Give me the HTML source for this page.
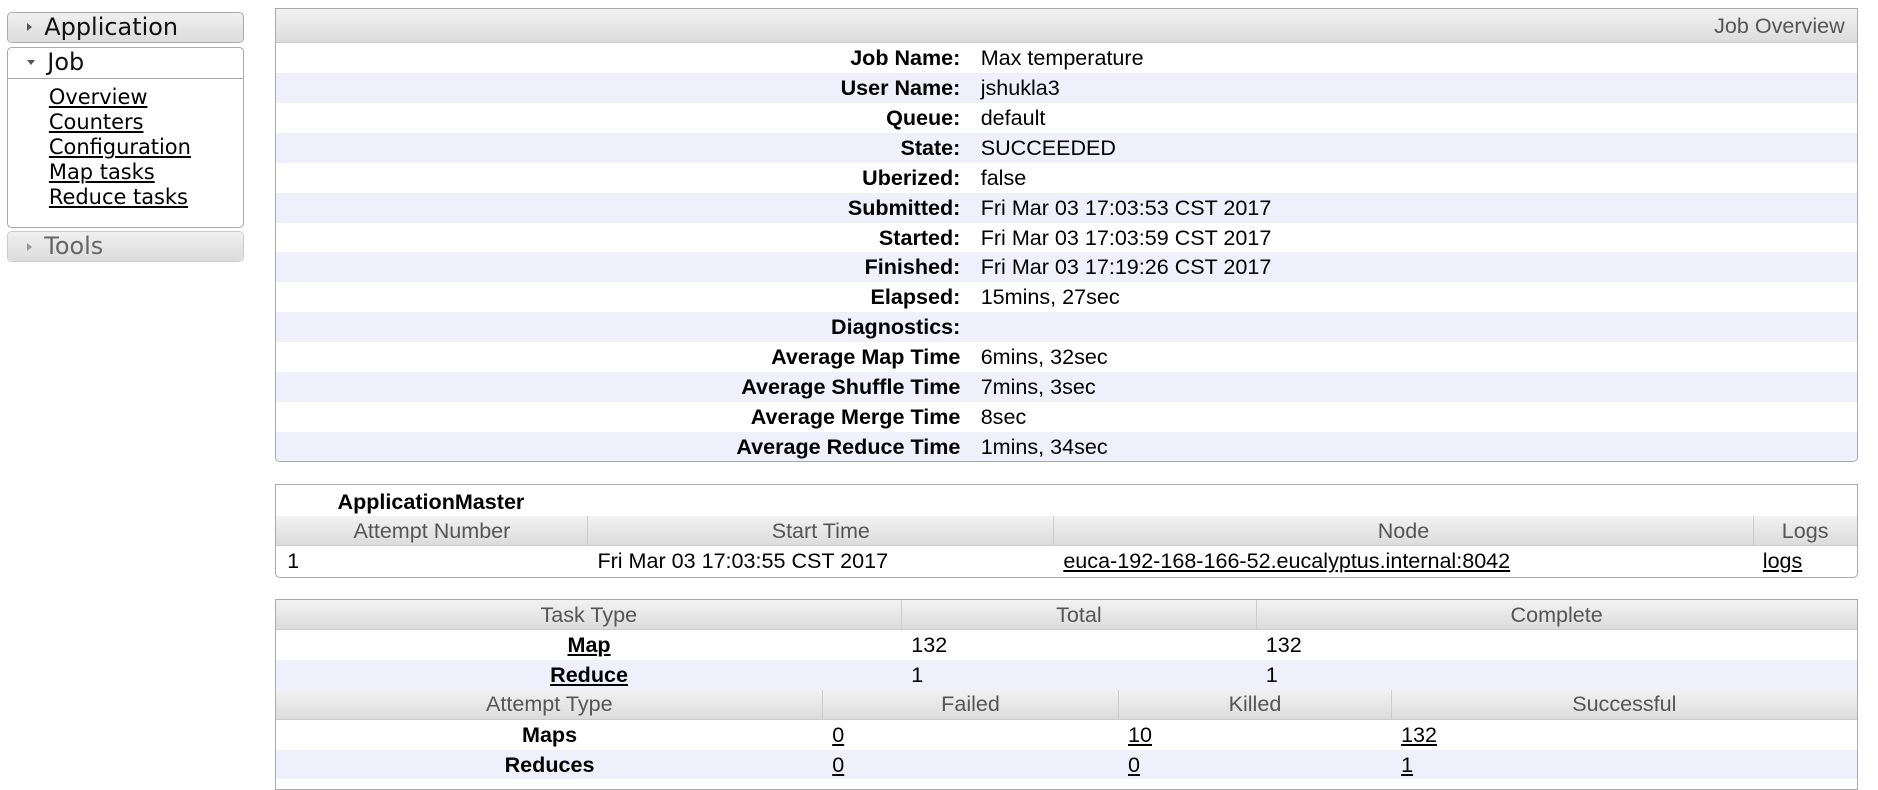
<!DOCTYPE html>
<html><head><meta charset="utf-8"><style>
*{box-sizing:border-box}
html,body{margin:0;padding:0;background:#fff}
body{width:1878px;height:776px;overflow:hidden}
#w{zoom:1.19770;width:1568px;height:648px;position:relative;font-family:"Liberation Sans",Arial,sans-serif;color:#000}
.sb{position:absolute;left:6px;width:198px;font-family:"DejaVu Sans",Verdana,sans-serif;border:1px solid #aaa;border-radius:4px}
.sbh{background:linear-gradient(#f0f0f0,#dcdcdc);height:100%;border-radius:4px;font-size:20px;padding-left:16px;line-height:24px;color:#111}
.tri{display:inline-block;width:0;height:0;border-top:4px solid transparent;border-bottom:4px solid transparent;border-left:5px solid #555;margin-right:10px;vertical-align:3px}
.trid{display:inline-block;width:0;height:0;border-left:4px solid transparent;border-right:4px solid transparent;border-top:5px solid #555;margin-right:10px;vertical-align:4px}
.links a{display:block;color:#000;font-size:17.5px;line-height:21px;margin-left:34px}
.box{position:absolute;left:230px;width:1321px;border:1px solid #aaa;border-radius:0 0 4px 4px;overflow:hidden}
.hd{background:linear-gradient(#f2f2f2,#dcdcdc);color:#555;font-size:18px}
table{border-collapse:collapse;width:100%;font-size:18px;table-layout:fixed}
td,th{padding:0;height:25px;white-space:nowrap}
th{font-weight:normal;color:#555;background:linear-gradient(#f2f2f2,#dcdcdc);border-left:1px solid #ccc;border-bottom:1px solid #ccc}
th:first-child{border-left:none}
tr.o td{background:#f0f0fc}
td.l{text-align:right;font-weight:bold;padding-right:17px;width:588px}
a{color:#000;text-decoration:underline}
</style></head><body><div id="w">
<div class="sb" style="top:10px;height:26px"><div class="sbh"><span class="tri"></span>Application</div></div>
<div class="sb" style="top:39px;height:151px">
<div style="height:26px;border-bottom:1px solid #aaa;font-size:20px;padding-left:16px;line-height:24px;color:#111"><span class="trid"></span>Job</div>
<div class="links" style="padding-top:5px"><a>Overview</a><a>Counters</a><a>Configuration</a><a>Map tasks</a><a>Reduce tasks</a></div>
</div>
<div class="sb" style="top:193px;height:26px;border-color:#ccc"><div class="sbh" style="color:#666"><span class="tri" style="border-left-color:#999"></span>Tools</div></div>

<div class="box" style="top:7px;height:379px">
<div class="hd" style="height:28px;line-height:28px;text-align:right;padding-right:10px;border-bottom:1px solid #ccc">Job Overview</div>
<table>
<tr><td class="l">Job Name:</td><td>Max temperature</td></tr>
<tr class="o"><td class="l">User Name:</td><td>jshukla3</td></tr>
<tr><td class="l">Queue:</td><td>default</td></tr>
<tr class="o"><td class="l">State:</td><td>SUCCEEDED</td></tr>
<tr><td class="l">Uberized:</td><td>false</td></tr>
<tr class="o"><td class="l">Submitted:</td><td>Fri Mar 03 17:03:53 CST 2017</td></tr>
<tr><td class="l">Started:</td><td>Fri Mar 03 17:03:59 CST 2017</td></tr>
<tr class="o"><td class="l">Finished:</td><td>Fri Mar 03 17:19:26 CST 2017</td></tr>
<tr><td class="l">Elapsed:</td><td>15mins, 27sec</td></tr>
<tr class="o"><td class="l">Diagnostics:</td><td></td></tr>
<tr><td class="l">Average Map Time</td><td>6mins, 32sec</td></tr>
<tr class="o"><td class="l">Average Shuffle Time</td><td>7mins, 3sec</td></tr>
<tr><td class="l">Average Merge Time</td><td>8sec</td></tr>
<tr class="o"><td class="l">Average Reduce Time</td><td>1mins, 34sec</td></tr>
</table></div>

<div class="box" style="top:404px;height:79px">
<div style="height:26px;line-height:28px;font-weight:bold;padding-left:51px;font-size:18px">ApplicationMaster</div>
<table>
<tr><th style="width:260px">Attempt Number</th><th style="width:389px">Start Time</th><th style="width:584px">Node</th><th>Logs</th></tr>
<tr><td style="padding-left:9px">1</td><td style="padding-left:8px">Fri Mar 03 17:03:55 CST 2017</td><td style="padding-left:8px"><a>euca-192-168-166-52.eucalyptus.internal:8042</a></td><td style="padding-left:8px"><a>logs</a></td></tr>
</table></div>

<div class="box" style="top:500px;height:160px;border-radius:0">
<table>
<tr><th style="width:522px">Task Type</th><th style="width:296px">Total</th><th>Complete</th></tr>
<tr><td style="text-align:center;font-weight:bold"><a>Map</a></td><td style="padding-left:8px">132</td><td style="padding-left:8px">132</td></tr>
<tr class="o"><td style="text-align:center;font-weight:bold"><a>Reduce</a></td><td style="padding-left:8px">1</td><td style="padding-left:8px">1</td></tr>
</table>
<table>
<tr><th style="width:456px">Attempt Type</th><th style="width:247px">Failed</th><th style="width:228px">Killed</th><th>Successful</th></tr>
<tr><td style="text-align:center;font-weight:bold">Maps</td><td style="padding-left:8px"><a>0</a></td><td style="padding-left:8px"><a>10</a></td><td style="padding-left:8px"><a>132</a></td></tr>
<tr class="o"><td style="text-align:center;font-weight:bold">Reduces</td><td style="padding-left:8px"><a>0</a></td><td style="padding-left:8px"><a>0</a></td><td style="padding-left:8px"><a>1</a></td></tr>
</table></div>
</div></body></html>
